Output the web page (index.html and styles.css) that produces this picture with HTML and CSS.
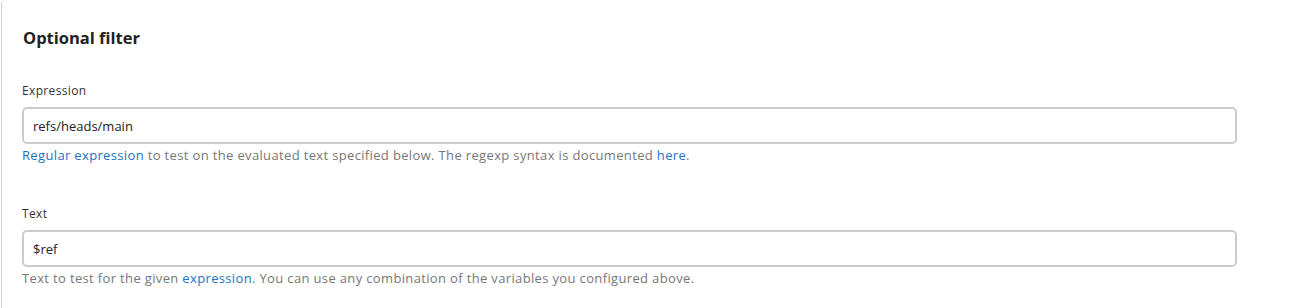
FILE: index.html
```html
<!DOCTYPE html>
<html lang="en">
  <head>
    <meta charset="UTF-8" />
    <meta name="viewport" content="width=device-width, initial-scale=1.0" />
    <title>Optional filter</title>
    <link rel="stylesheet" href="styles.css">
  </head>
  <body>
    <div class="panel">
      <h3 class="panel-title">Optional filter</h3>

      <div class="field">
        <label class="field-label" for="expression">Expression</label>
        <input class="field-input" id="expression" type="text" value="refs/heads/main" />
        <div class="field-help">
          <a href="#">Regular expression</a> to test on the evaluated text specified below. The regexp syntax is documented <a href="#">here</a>.
        </div>
      </div>

      <div class="field">
        <label class="field-label" for="text">Text</label>
        <input class="field-input" id="text" type="text" value="$ref" />
        <div class="field-help">
          Text to test for the given <a href="#">expression</a>. You can use any combination of the variables you configured above.
        </div>
      </div>
    </div>
  </body>
</html>
```

FILE: styles.css
```css
body {
  margin: 0;
  background-color: #fff;
  font-family: "Open Sans", Arial, sans-serif;
  color: #333;
}

.panel {
  border-left: 1px solid #d4d4d4;
  border-top-left-radius: 4px;
  margin-left: 1px;
  padding: 26px 56px 0 20px;
  height: 308px;
  box-sizing: border-box;
}

.panel-title {
  margin: 0 0 33px 1px;
  font-size: 16.5px;
  font-weight: bold;
  color: #222;
}

.field {
  margin-bottom: 41px;
}

.field-label {
  display: block;
  font-size: 12px;
  letter-spacing: 0.35px;
  margin-bottom: 8px;
}

.field-input {
  display: block;
  width: 100%;
  height: 37px;
  box-sizing: border-box;
  padding: 0 9px;
  border: 2px solid #cbcbcb;
  border-radius: 5px;
  font-family: inherit;
  font-size: 13px;
  color: #222;
  outline: none;
}

.field-help {
  margin-top: 2px;
  font-size: 13px;
  letter-spacing: 0.35px;
  color: #777;
}

.field-help a {
  color: #1a73c4;
  text-decoration: none;
}
```
